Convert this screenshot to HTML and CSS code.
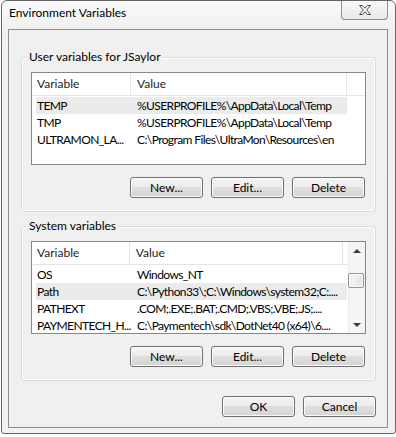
FILE: index.html
```html
<!DOCTYPE html>
<html lang="en">
<head>
  <meta charset="UTF-8" />
  <title>Environment Variables</title>
  <link rel="stylesheet" href="styles.css">
</head>
<body>
  <div class="window">
    <div class="titlebar">
      <span class="title">Environment Variables</span>
      <button class="close" aria-label="Close">
        <svg width="12" height="10" viewBox="0 0 12 10">
          <polygon points="0.5,0.5 3.5,0.5 6,3.3 8.5,0.5 11.5,0.5 7.7,5 11.5,9.5 8.5,9.5 6,6.7 3.5,9.5 0.5,9.5 4.3,5" fill="#fff" stroke="#4a4a4a" stroke-width="1" stroke-linejoin="round" />
        </svg>
      </button>
    </div>

    <div class="client">
      <fieldset class="group group-user">
        <legend>User variables for JSaylor</legend>
        <div class="listview">
          <div class="cols">
            <div class="header">
              <div class="hcell c1">Variable</div>
              <div class="hcell c2">Value</div>
              <div class="hcell filler"></div>
            </div>
            <div class="rows">
              <div class="row selected"><span class="cell c1">TEMP</span><span class="cell c2">%USERPROFILE%\AppData\Local\Temp</span></div>
              <div class="row"><span class="cell c1">TMP</span><span class="cell c2">%USERPROFILE%\AppData\Local\Temp</span></div>
              <div class="row"><span class="cell c1">ULTRAMON_LA...</span><span class="cell c2">C:\Program Files\UltraMon\Resources\en</span></div>
            </div>
          </div>
        </div>
        <div class="actions">
          <button class="btn">New...</button>
          <button class="btn">Edit...</button>
          <button class="btn">Delete</button>
        </div>
      </fieldset>

      <fieldset class="group group-system">
        <legend>System variables</legend>
        <div class="listview">
          <div class="cols">
            <div class="header">
              <div class="hcell c1">Variable</div>
              <div class="hcell c2">Value</div>
              <div class="hcell filler"></div>
            </div>
            <div class="rows">
              <div class="row"><span class="cell c1">OS</span><span class="cell c2">Windows_NT</span></div>
              <div class="row selected"><span class="cell c1">Path</span><span class="cell c2">C:\Python33\;C:\Windows\system32;C:....</span></div>
              <div class="row"><span class="cell c1">PATHEXT</span><span class="cell c2">.COM;.EXE;.BAT;.CMD;.VBS;.VBE;.JS;....</span></div>
              <div class="row"><span class="cell c1">PAYMENTECH_H...</span><span class="cell c2">C:\Paymentech\sdk\DotNet40 (x64)\6....</span></div>
            </div>
          </div>
          <div class="scrollbar">
            <div class="arrow"><span class="tri up"></span></div>
            <div class="track"><div class="thumb"></div></div>
            <div class="arrow"><span class="tri down"></span></div>
          </div>
        </div>
        <div class="actions">
          <button class="btn">New...</button>
          <button class="btn">Edit...</button>
          <button class="btn">Delete</button>
        </div>
      </fieldset>

      <div class="footer">
        <button class="btn">OK</button>
        <button class="btn">Cancel</button>
      </div>
    </div>
  </div>
</body>
</html>
```

FILE: styles.css
```css
body {
  margin: 0;
  background-color: #fff;
  font-family: Lato, "Liberation Sans", sans-serif;
  font-size: 12px;
  color: #000;
}
.window {
  margin-left: 1px;
  width: 395px;
  height: 434px;
  box-sizing: border-box;
  border: 1px solid #666;
  border-radius: 6px 6px 3px 3px;
  background: linear-gradient(#fafafa, #f0f0f0 28px, #f2f2f2);
  display: flex;
  flex-direction: column;
}
.titlebar {
  height: 28px;
  flex-shrink: 0;
  display: flex;
  justify-content: space-between;
  align-items: flex-start;
  padding-left: 7px;
}
.title {
  margin-top: 4px;
  line-height: 16px;
}
.close {
  width: 47px;
  height: 19px;
  margin-right: 7px;
  padding: 0;
  box-sizing: border-box;
  border: 1px solid #8f8f8f;
  border-top: none;
  border-radius: 0 0 4px 4px;
  background: linear-gradient(#f8f8f8, #e9e9e9);
  display: flex;
  align-items: center;
  justify-content: center;
}
.client {
  flex: 1;
  margin: 0 7px 5px 6px;
  border: 1px solid #8e8e8e;
  background-color: #f0f0f0;
  display: flex;
  flex-direction: column;
}
.group {
  margin: 7px 11px 0 12px;
  padding: 0 0 13px 0;
  min-width: 0;
  border: 1px solid #d5dfe5;
  border-radius: 3px;
  box-shadow: inset 0 0 0 1px #fff;
}
.group-user {
  margin-top: 20px;
}
legend {
  margin-left: 5px;
  padding: 0 2px;
  line-height: 14px;
  background-color: #f0f0f0;
}
.listview {
  margin: 8px 9px 0;
  height: 93px;
  box-sizing: border-box;
  border: 1px solid #828790;
  background-color: #fff;
  display: flex;
  overflow: hidden;
}
.cols {
  flex: 1;
  min-width: 0;
}
.header {
  display: flex;
  height: 23px;
  box-sizing: border-box;
  border-bottom: 1px solid #e5e5e5;
}
.hcell {
  line-height: 22px;
  padding-left: 5px;
  box-sizing: border-box;
  border-right: 1px solid #e5e5e5;
  color: #1e1e1e;
}
.hcell.c1 {
  width: 99px;
}
.hcell.c2 {
  width: 216px;
  padding-left: 6px;
}
.hcell.filler {
  flex: 1;
  border-right: none;
}
.rows {
  padding-top: 1px;
}
.row {
  display: flex;
  height: 17px;
  line-height: 17px;
  margin-left: 4px;
  width: 311px;
  letter-spacing: -0.6px;
}
.row.selected {
  background-color: #ebebeb;
}
.cell {
  white-space: nowrap;
  overflow: hidden;
  box-sizing: border-box;
}
.cell.c1 {
  width: 95px;
  flex-shrink: 0;
  padding-left: 1px;
}
.cell.c2 {
  flex: 1;
  padding-left: 6px;
}
.scrollbar {
  width: 17px;
  flex-shrink: 0;
  display: flex;
  flex-direction: column;
  background: linear-gradient(to right, #e9e9e9, #f5f5f5 2px, #f5f5f5 15px, #eeeeee);
}
.arrow {
  height: 17px;
  display: flex;
  align-items: center;
  justify-content: center;
}
.tri {
  width: 0;
  height: 0;
  border-left: 4px solid transparent;
  border-right: 4px solid transparent;
}
.tri.up {
  border-bottom: 4px solid #3d3d3d;
}
.tri.down {
  border-top: 4px solid #3d3d3d;
}
.track {
  flex: 1;
}
.thumb {
  margin: 14px 1px 0 0;
  height: 15px;
  box-sizing: border-box;
  border: 1px solid #959595;
  border-radius: 2px;
  background: linear-gradient(to right, #f7f7f7, #e4e4e4);
  box-shadow: inset 0 0 0 1px #fbfbfb;
}
.actions {
  display: flex;
  justify-content: flex-end;
  gap: 8px;
  margin: 12px 10px 0 0;
}
.btn {
  width: 73px;
  height: 21px;
  box-sizing: border-box;
  padding: 0;
  border: 1px solid #707070;
  border-radius: 3px;
  background: linear-gradient(#f4f4f4 0%, #ececec 48%, #dfdfdf 50%, #d4d4d4 100%);
  box-shadow: inset 0 0 0 1px #fbfbfb;
  font-family: Lato, "Liberation Sans", sans-serif;
  font-size: 12px;
  line-height: 19px;
  color: #000;
}
.footer {
  display: flex;
  justify-content: flex-end;
  gap: 8px;
  margin: 15px 11px 0 0;
}
```
